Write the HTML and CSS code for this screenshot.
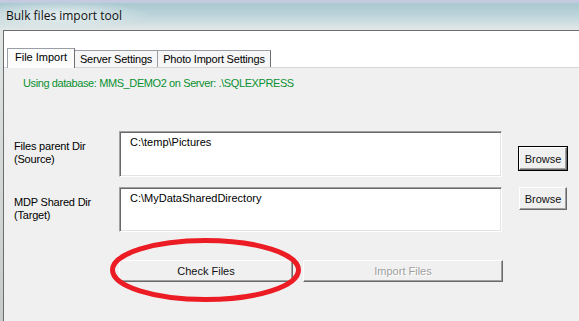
FILE: index.html
```html
<!DOCTYPE html>
<html lang="en">
<head>
    <meta charset="UTF-8">
    <meta name="viewport" content="width=device-width, initial-scale=1.0">
    <title>Bulk files import tool</title>
    <link rel="stylesheet" href="styles.css">
</head>
<body>
    <div class="titlebar">
        <span class="title">Bulk files import tool</span>
    </div>

    <div class="window">
        <div class="frame-left"></div>
        <div class="client">
            <div class="tabstrip">
                <div class="tab active">File Import</div>
                <div class="tab">Server Settings</div>
                <div class="tab">Photo Import Settings</div>
            </div>

            <div class="tab-page">
                <div class="db-info">Using database: MMS_DEMO2 on Server: .\SQLEXPRESS</div>

                <div class="dir-grid">
                    <label class="dir-label">Files parent Dir<br>(Source)</label>
                    <div class="textbox">C:\temp\Pictures</div>
                    <button class="btn browse default">Browse</button>

                    <label class="dir-label">MDP Shared Dir<br>(Target)</label>
                    <div class="textbox">C:\MyDataSharedDirectory</div>
                    <button class="btn browse top">Browse</button>
                </div>

                <div class="actions">
                    <div class="check-wrap">
                        <button class="btn check">Check Files</button>
                        <svg class="ring" width="200" height="70" viewBox="0 0 200 70">
                            <ellipse cx="95.5" cy="32" rx="93" ry="29.5" fill="none" stroke="#ec1c24" stroke-width="5"/>
                        </svg>
                    </div>
                    <button class="btn import" disabled>Import Files</button>
                </div>
            </div>
        </div>
    </div>
</body>
</html>
```

FILE: styles.css
```css
html, body {
    margin: 0;
    height: 100%;
    overflow: hidden;
}
body {
    font-family: "Liberation Sans", Arial, sans-serif;
    font-size: 11px;
    color: #000;
    background: #c9d2d0;
}

.titlebar {
    height: 30px;
    box-sizing: border-box;
    padding: 8px 0 0 6px;
    border-top: 3px solid #c4cbe0;
    background:
        radial-gradient(ellipse 90px 14px at 60px 12px, rgba(236,242,242,0.85), rgba(236,242,242,0)),
        linear-gradient(#a9c8d0, #bcd4da 45%, #e2e8e8);
}
.title {
    font-family: "Open Sans", "Noto Sans", sans-serif;
    font-size: 12px;
    color: #111;
    position: relative;
    top: -4px;
}

.window {
    display: flex;
    height: calc(100% - 30px);
}
.frame-left {
    width: 3px;
    background: linear-gradient(#dfe5e4, #c5ccc8);
}
.client {
    flex: 1;
    background: #fff;
    border-top: 1px solid #6c6c6c;
    border-left: 1px solid #6c6c6c;
}

/* tabs */
.tabstrip {
    display: flex;
    align-items: flex-end;
    height: 36px;
    padding-left: 3px;
}
.tab {
    height: 16px;
    padding: 0 5px;
    line-height: 16px;
    letter-spacing: -0.2px;
    background: #f6f6f6;
    border: 1px solid #9a9ea6;
    border-bottom: none;
    border-right: 1px solid #6f6f6f;
    margin-right: -1px;
    white-space: nowrap;
}
.tab.active {
    height: 19px;
    line-height: 17px;
    padding: 0 7px;
    letter-spacing: 0;
    background: #fcfcfc;
    position: relative;
    z-index: 1;
    margin-bottom: -1px;
}

.tab-page {
    background: #f0f0f0;
    border-top: 1px solid #d6d6d6;
    height: 100%;
    padding: 9px 0 0 10px;
    box-sizing: border-box;
}

.db-info {
    color: #0a9132;
    margin-left: 9px;
    letter-spacing: -0.4px;
}

/* directory rows */
.dir-grid {
    display: grid;
    grid-template-columns: 88px 383px 48px;
    grid-template-rows: 46px 45px;
    column-gap: 17px;
    row-gap: 10px;
    margin-top: 42px;
}
.dir-label {
    padding-top: 9px;
    line-height: 13px;
    white-space: nowrap;
    letter-spacing: -0.2px;
}
.textbox {
    background: #fff;
    border: 1px solid;
    border-color: #a0a0a0 #fff #fff #a0a0a0;
    box-shadow: inset 1px 1px #696969, inset -1px -1px #e3e3e3;
    padding: 4px 0 0 10px;
}

.btn {
    font-family: "Liberation Sans", Arial, sans-serif;
    font-size: 11px;
    color: #111;
    background: #f0f0f0;
    border: 1px solid;
    border-color: #fff #696969 #696969 #fff;
    box-shadow: inset -1px -1px #a0a0a0;
    padding: 0;
    margin: 0;
}
.browse {
    width: 48px;
    height: 23px;
    align-self: start;
    margin-top: 16px;
}
.browse.default {
    outline: 1px solid #000;
}
.browse.top {
    margin-top: 0;
}

/* action buttons */
.actions {
    display: flex;
    gap: 10px;
    margin: 28px 0 0 105px;
}
.check-wrap {
    position: relative;
}
.check {
    width: 174px;
    height: 22px;
}
.ring {
    position: absolute;
    left: -9px;
    top: -22px;
    pointer-events: none;
}
.import {
    width: 200px;
    height: 22px;
    color: #a0a0a0;
    text-shadow: 1px 1px #fff;
}
```
